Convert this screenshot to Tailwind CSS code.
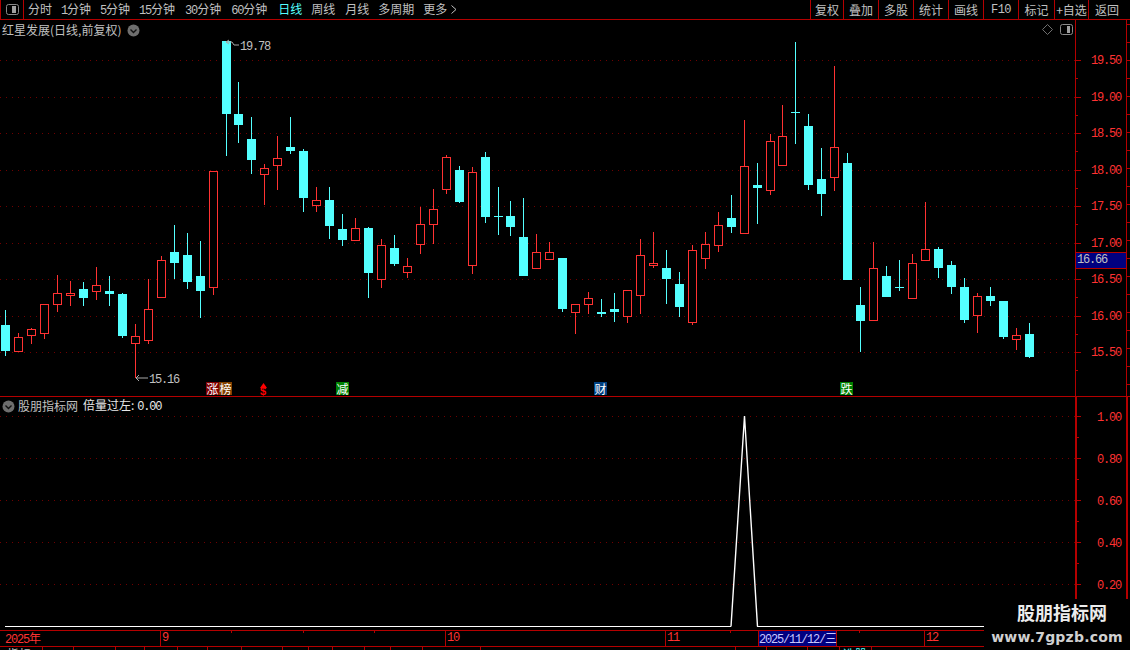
<!DOCTYPE html>
<html lang="zh-CN">

<head>
  <meta charset="UTF-8">
  <title>红星发展</title>
  <script src="https://cdn.jsdelivr.net/npm/@tailwindcss/browser@4"></script>
</head>

<body class="bg-black w-[1130px] h-[650px] overflow-hidden relative font-['Noto_Sans_CJK_SC',sans-serif] text-[12px] leading-[14px] text-[#c0c0c0]">

  <!-- toolbar -->
  <div class="h-[20px] border-b border-[#b40000] flex items-center">
    <div class="w-[24px] h-[19px] border-x border-[#b40000] flex items-center justify-center">
      <svg width="13" height="11" viewBox="0 0 13 11"><rect x="0.5" y="0.5" width="12" height="10" rx="2" fill="none" stroke="#8a8a8a"/><rect x="6" y="2" width="4" height="7" fill="#a0a0a0"/></svg>
    </div>
    <div class="flex pl-[4px]">
      <span>分时</span>
      <span class="ml-[9px]"><span class="font-['Liberation_Mono'] tracking-[-1.2px]">1</span>分钟</span>
      <span class="ml-[9px]"><span class="font-['Liberation_Mono'] tracking-[-1.2px]">5</span>分钟</span>
      <span class="ml-[9px]"><span class="font-['Liberation_Mono'] tracking-[-1.2px]">15</span>分钟</span>
      <span class="ml-[10px]"><span class="font-['Liberation_Mono'] tracking-[-1.2px]">30</span>分钟</span>
      <span class="ml-[10px]"><span class="font-['Liberation_Mono'] tracking-[-1.2px]">60</span>分钟</span>
      <span class="ml-[11px] text-[#54ffff]">日线</span>
      <span class="ml-[9px]">周线</span>
      <span class="ml-[10px]">月线</span>
      <span class="ml-[9px]">多周期</span>
      <span class="ml-[9px]">更多</span>
      <svg class="ml-[4px] mt-[3px]" width="6" height="9" viewBox="0 0 6 9"><path d="M0.5 0.5 L5 4.5 L0.5 8.5" fill="none" stroke="#c0c0c0"/></svg>
    </div>
    <div class="ml-auto flex h-[19px]">
      <span class="w-[33px] border-l border-[#b40000] flex items-center justify-center">复权</span>
      <span class="w-[35px] border-l border-[#b40000] flex items-center justify-center">叠加</span>
      <span class="w-[35px] border-l border-[#b40000] flex items-center justify-center">多股</span>
      <span class="w-[35px] border-l border-[#b40000] flex items-center justify-center">统计</span>
      <span class="w-[35px] border-l border-[#b40000] flex items-center justify-center">画线</span>
      <span class="w-[35px] border-l border-[#b40000] flex items-center justify-center font-['Liberation_Mono'] tracking-[-0.6px]">F10</span>
      <span class="w-[36px] border-l border-[#b40000] flex items-center justify-center">标记</span>
      <span class="w-[34px] border-l border-[#b40000] flex items-center justify-center">+自选</span>
      <span class="w-[42px] border-l border-[#b40000] flex items-center pl-[6px]">返回</span>
    </div>
  </div>

  <!-- main pane -->
  <div class="h-[377px] flex border-b border-[#b40000]">
    <div class="w-[1075px] relative">
      <svg id="kline" class="block" width="1075" height="376" viewBox="0 20 1075 376" shape-rendering="crispEdges"></svg>

      <div class="absolute left-[2px] top-[3px] flex items-center">
        <span>红星发展(日线,前复权)</span>
        <svg class="ml-[6px]" width="13" height="13" viewBox="0 0 13 13"><circle cx="6.5" cy="6.5" r="6" fill="#6e6e6e"/><path d="M3.5 5.5 L6.5 8.5 L9.5 5.5" fill="none" stroke="#111" stroke-width="1.4"/></svg>
      </div>
      <svg class="absolute left-[1042px] top-[4px]" width="11" height="11" viewBox="0 0 11 11"><path d="M5.5 0.5 L10.5 5.5 L5.5 10.5 L0.5 5.5 Z" fill="none" stroke="#707070"/></svg>
      <svg class="absolute left-[1060px] top-[4px]" width="13" height="11" viewBox="0 0 13 11"><rect x="0.5" y="0.5" width="12" height="10" rx="2" fill="none" stroke="#8a8a8a"/><rect x="7" y="2" width="3" height="7" fill="#a0a0a0"/></svg>

      <!-- high / low marks -->
      <svg class="absolute left-[224px] top-[19px]" width="16" height="9" viewBox="0 0 16 9"><path d="M5 1 L2 3 L5 5 M2 3 L8 3 L10 6 L15 6" fill="none" stroke="#a8a8a8"/></svg>
      <span class="absolute left-[240px] top-[20px] font-['Liberation_Mono'] tracking-[-1.2px]">19.78</span>
      <svg class="absolute left-[135px] top-[354px]" width="13" height="8" viewBox="0 0 13 8"><path d="M4 1 L1 4 L4 7 M1 4 L13 4" fill="none" stroke="#a8a8a8"/></svg>
      <span class="absolute left-[149px] top-[353px] font-['Liberation_Mono'] tracking-[-1.2px]">15.16</span>

      <!-- event tags -->
      <div class="absolute left-[206px] top-[362px] flex text-white">
        <span class="w-[13px] h-[13px] bg-[#800000] flex items-center justify-center">涨</span>
        <span class="w-[13px] h-[13px] bg-[#804000] flex items-center justify-center">榜</span>
      </div>
      <span class="absolute left-[260px] top-[364px] text-[#ff0000] font-bold font-['Liberation_Sans'] text-[11px] leading-[15px]">$</span>
      <svg class="absolute left-[260px] top-[363px]" width="7" height="5" viewBox="0 0 7 5"><path d="M3.5 0 L7 5 L0 5 Z" fill="#ff0000"/></svg>
      <span class="absolute left-[336px] top-[362px] w-[13px] h-[13px] bg-[#008000] text-white flex items-center justify-center">减</span>
      <span class="absolute left-[594px] top-[362px] w-[13px] h-[13px] bg-[#004080] text-white flex items-center justify-center">财</span>
      <span class="absolute left-[840px] top-[362px] w-[13px] h-[13px] bg-[#008000] text-white flex items-center justify-center">跌</span>
    </div>

    <!-- price axis -->
    <div class="relative w-[55px] border-l border-[#b40000] text-[#ff3232] font-['Liberation_Mono'] tracking-[-1.2px]">
      <svg id="priceTicks" class="absolute left-0 top-0" width="54" height="376" viewBox="1076 20 54 376" shape-rendering="crispEdges"></svg>
      <span class="absolute left-[15px] top-[34px]">19.50</span>
      <span class="absolute left-[15px] top-[71px]">19.00</span>
      <span class="absolute left-[15px] top-[107px]">18.50</span>
      <span class="absolute left-[15px] top-[144px]">18.00</span>
      <span class="absolute left-[15px] top-[180px]">17.50</span>
      <span class="absolute left-[15px] top-[217px]">17.00</span>
      <span class="absolute left-[15px] top-[253px]">16.50</span>
      <span class="absolute left-[15px] top-[290px]">16.00</span>
      <span class="absolute left-[15px] top-[326px]">15.50</span>
      <span class="absolute left-0 top-[232px] w-[51px] h-[17px] bg-[#000080] border-y border-r border-[#b40000] text-[#c0c0c0] pl-[1px] text-[12px]">16.66</span>
    </div>
  </div>

  <!-- indicator pane -->
  <div class="h-[233px] flex">
    <div class="w-[1075px] relative">
      <svg id="indicator" class="block" width="1075" height="233" viewBox="0 397 1075 233" shape-rendering="crispEdges"></svg>
      <div class="absolute left-[2px] top-[1px] flex items-center">
        <svg width="13" height="13" viewBox="0 0 13 13"><circle cx="6.5" cy="6.5" r="6" fill="#6e6e6e"/><path d="M3.5 5.5 L6.5 8.5 L9.5 5.5" fill="none" stroke="#111" stroke-width="1.4"/></svg>
        <span class="ml-[3px]">股朋指标网</span>
        <span class="ml-[5px] text-[#e8e8e8]">倍量过左:<span class="ml-[3px] font-['Liberation_Mono'] tracking-[-1.2px]">0.00</span></span>
      </div>
    </div>
    <div class="relative w-[55px] border-l-2 border-[#b40000] text-[#ff3232] font-['Liberation_Mono'] tracking-[-1.2px]">
      <svg id="indicatorTicks" class="absolute left-0 top-0" width="53" height="233" viewBox="1077 397 53 233" shape-rendering="crispEdges"></svg>
      <span class="absolute left-[20px] top-[14px]">1.00</span>
      <span class="absolute left-[20px] top-[56px]">0.80</span>
      <span class="absolute left-[20px] top-[98px]">0.60</span>
      <span class="absolute left-[20px] top-[140px]">0.40</span>
      <span class="absolute left-[20px] top-[182px]">0.20</span>
    </div>
  </div>

  <!-- date axis -->
  <div class="h-[17px] relative border-y border-[#b40000] text-[#ff3232] font-['Liberation_Mono'] tracking-[-1.2px]">
    <span class="absolute left-[5px] top-0">2025<span class="font-['Noto_Sans_CJK_SC'] tracking-normal">年</span></span>
    <span class="absolute left-[160px] top-0 h-[15px] border-l border-[#b40000] pl-[1px]">9</span>
    <span class="absolute left-[445px] top-0 h-[15px] border-l border-[#b40000] pl-[1px]">10</span>
    <span class="absolute left-[665px] top-0 h-[15px] border-l border-[#b40000] pl-[1px]">11</span>
    <span class="absolute left-[758px] top-0 w-[79px] h-[15px] bg-[#000080] border-x border-[#b40000] text-[#c8c8ff] whitespace-nowrap">2025/11/12/<span class="font-['Noto_Sans_CJK_SC'] tracking-normal">三</span></span>
    <span class="absolute left-[924px] top-0 h-[15px] border-l border-[#b40000] pl-[1px]">12</span>
    <i class="absolute left-[231px] top-0 w-px h-[2px] bg-[#b40000]"></i>
    <i class="absolute left-[303px] top-0 w-px h-[2px] bg-[#b40000]"></i>
    <i class="absolute left-[374px] top-0 w-px h-[2px] bg-[#b40000]"></i>
    <i class="absolute left-[730px] top-0 w-px h-[2px] bg-[#b40000]"></i>
    <i class="absolute left-[859px] top-0 w-px h-[2px] bg-[#b40000]"></i>
  </div>

  <!-- sheet tabs, cut off by the window -->
  <div class="h-[3px] overflow-hidden flex">
    <span class="w-[43px] border-r border-[#b40000] pl-[7px]">指标</span>
    <span class="w-[31px] border-r border-[#b40000] pl-[7px]">一</span>
    <span class="w-[42px] border-r border-[#b40000]"></span>
    <span class="w-[29px] border-r border-[#b40000]"></span>
    <span class="w-[33px] border-r border-[#b40000]"></span>
    <span class="w-[30px] border-r border-[#b40000]"></span>
    <span class="w-[34px] border-r border-[#b40000]"></span>
    <span class="w-[41px] border-r border-[#b40000]"></span>
    <span class="w-[26px] border-r border-[#b40000]"></span>
    <span class="w-[24px] border-r border-[#b40000]"></span>
    <span class="w-[32px] border-r border-[#b40000]"></span>
    <span class="w-[26px] border-r border-[#b40000]"></span>
    <span class="w-[32px] border-r border-[#b40000]"></span>
    <span class="w-[58px] border-r border-[#b40000]"></span>
    <span class="w-[255px] border-r border-[#b40000]"></span>
    <span class="w-[31px] border-r border-[#b40000]"></span>
    <span class="w-[41px] border-r border-[#b40000]"></span>
    <span class="w-[32px] border-r border-[#b40000]"></span>
    <span class="w-[32px] border-r border-[#b40000] text-[#54ffff] pl-[3px]">选股</span>
  </div>

  <!-- watermark -->
  <div class="absolute left-[984px] top-[599px] w-[146px] h-[51px] bg-black flex flex-col items-center pt-[2px]">
    <span class="ml-[10px] text-[18px] leading-[22px] font-bold text-[#ececec]">股朋指标网</span>
    <span class="font-['DejaVu_Sans'] font-bold text-[14px] leading-[18px] mt-[5px] text-[#d0d0d0] tracking-[0.2px]">www.7gpzb.com</span>
  </div>

  <script>
    var CYAN = "#54ffff", RED = "#ff3232", AXIS = "#b40000", GRID = "#700000";
    // high, low, body top, body bottom in pixels; r = hollow red, c = solid cyan
    var candles = [
      "c310,356,325,351", "r333,352,337,352", "r328,344,329,336", "r304,339,304,334", "r275,312,293,305",
      "r281,306,293,296", "c282,306,289,298", "r267,300,285,292", "c276,306,291,294", "c293,338,294,336",
      "r324,378,336,344", "r279,344,309,341", "r256,298,260,298", "c225,279,252,263", "c233,289,255,282",
      "c241,318,276,291", "r171,295,171,288", "c41,156,41,114", "c82,143,114,125", "c117,174,139,160",
      "r164,205,168,175", "r136,190,158,166", "c117,154,147,151", "c149,212,151,198", "r187,212,200,206",
      "c187,239,200,226", "c214,246,229,240", "r218,241,228,241", "c227,298,228,273", "r239,288,245,280",
      "c235,266,248,264", "r258,278,266,273", "r207,254,224,245", "r189,244,209,225", "r155,194,157,190",
      "c166,203,170,202", "r167,274,172,266", "c152,223,157,217", "c187,235,216,217", "c201,236,216,227",
      "c198,276,237,276", "r234,269,252,269", "r242,260,252,260", "c258,312,258,309", "r304,334,304,313",
      "r292,314,298,305", "c299,317,312,314", "c293,322,309,312", "r290,323,290,317", "r239,314,255,296",
      "r232,268,263,266", "c250,304,268,279", "c272,317,284,307", "r245,325,250,323", "r232,269,244,259",
      "r212,252,225,246", "c195,233,218,227", "r120,234,166,234", "c163,224,185,188", "r134,195,141,191",
      "r105,166,136,166", "c42,144,112,113", "c114,190,126,185", "c148,216,179,194", "r66,191,147,178",
      "c153,280,163,280", "c287,352,305,321", "r242,321,268,321", "c266,297,276,297", "c260,291,287,288",
      "r254,299,263,299", "r202,261,249,261", "c247,278,249,268", "c261,294,265,287", "c278,323,287,320",
      "r293,333,296,316", "c287,306,296,301", "c301,339,301,337", "r328,350,335,340", "c323,358,334,357"
    ];
    var gridY = [60, 97, 133, 170, 206, 243, 279, 316, 352];
    var subY = [416, 458, 500, 542, 584];

    function hline(y, x1, x2, dash) {
      return '<line x1="' + x1 + '" x2="' + x2 + '" y1="' + (y + .5) + '" y2="' + (y + .5) + '" stroke="' + (dash ? GRID : AXIS) + '"' +
        (dash ? ' stroke-dasharray="1 5"' : '') + '/>';
    }

    var k = gridY.map(function (y) { return hline(y, 0, 1075, true); }).join("");
    candles.forEach(function (s, i) {
      var up = s[0] == "r";
      var v = s.slice(1).split(",").map(Number);
      // the spacing loses a pixel every 21 bars or so
      var x = 5 + 13 * i - (i >= 18 ? 1 : 0) - (i >= 39 ? 1 : 0) - (i >= 60 ? 1 : 0);
      var col = up ? RED : CYAN;
      k += '<rect x="' + x + '" y="' + v[0] + '" width="1" height="' + (v[1] - v[0]) + '" fill="' + col + '"/>';
      if (up) {
        k += '<rect x="' + (x - 3.5) + '" y="' + (v[2] + .5) + '" width="8" height="' + (v[3] - v[2] - 1) + '" fill="#000" stroke="' + col + '"/>';
      } else {
        k += '<rect x="' + (x - 4) + '" y="' + v[2] + '" width="9" height="' + (v[3] - v[2]) + '" fill="' + col + '"/>';
      }
    });
    document.getElementById("kline").innerHTML = k;

    var t = '<line x1="1126.5" x2="1126.5" y1="20" y2="396" stroke="' + AXIS + '"/>';
    gridY.forEach(function (y) {
      t += hline(y, 1076, 1081);
      t += hline(y + 18, 1076, 1078);
    });
    for (var y = 24; y < 396; y += 18) t += hline(y, 1127, 1130);
    document.getElementById("priceTicks").innerHTML = t;

    var sub = subY.map(function (y) { return hline(y, 0, 1075, true); }).join("");
    sub += '<rect x="5" y="626" width="726" height="1" fill="#fff"/><rect x="757" y="626" width="318" height="1" fill="#fff"/>';
    sub += '<path d="M731 626.5 L744.5 416 L757.5 626.5" fill="none" stroke="#fff" stroke-width="1.4" shape-rendering="auto"/>';
    document.getElementById("indicator").innerHTML = sub;

    var st = '<rect x="1126" y="397" width="2" height="233" fill="' + AXIS + '"/>';
    subY.forEach(function (y) {
      st += hline(y, 1077, 1081);
      st += hline(y + 21, 1077, 1079);
    });
    document.getElementById("indicatorTicks").innerHTML = st;
  </script>
</body>

</html>
